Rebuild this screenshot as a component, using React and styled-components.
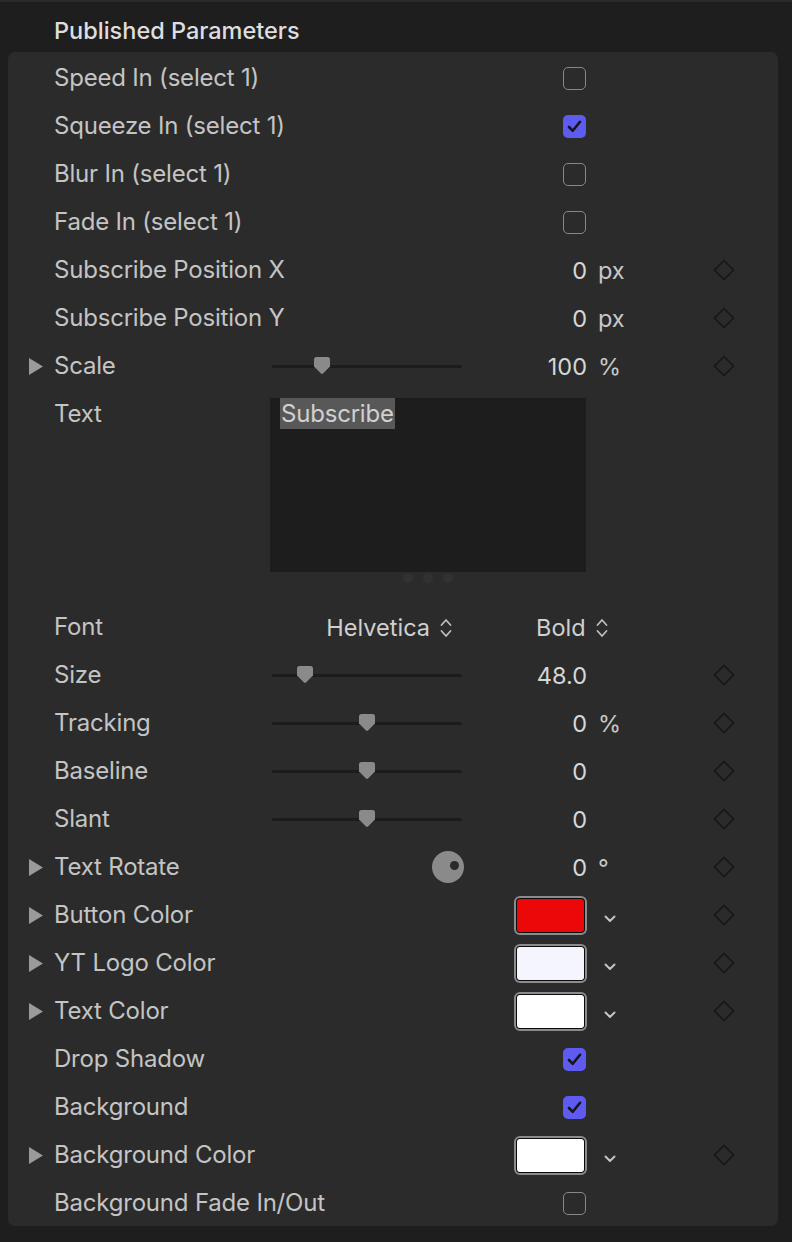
import React from "react";
import styled, { createGlobalStyle } from "styled-components";

const GlobalStyle = createGlobalStyle`
  html, body {
    margin: 0;
    padding: 0;
    background: #1e1e1e;
  }
  body {
    font-family: Inter, "Noto Sans", "Liberation Sans", sans-serif;
    -webkit-font-smoothing: antialiased;
  }
`;

const Page = styled.div`
  width: 792px;
  min-height: 1242px;
  box-sizing: border-box;
  border-top: 2px solid #2a2a2a;
  background: #1e1e1e;
`;

const Header = styled.div`
  height: 50px;
  box-sizing: border-box;
  padding: 6px 0 0 54px;
  display: flex;
  align-items: center;
  font-size: 23.5px;
  font-weight: 500;
  color: #dedede;
`;

const Panel = styled.div`
  margin: 0 14px 0 8px;
  padding: 1px 0 0;
  background: #2b2b2b;
  border-radius: 7px;
  overflow: hidden;
`;

const Row = styled.div`
  display: grid;
  grid-template-columns: 46px 218px 190px 125px 11px 102px 47px 1fr;
  height: ${(p) => p.$height || 48}px;
  align-items: ${(p) => (p.$top ? "start" : "center")};
  color: #c4c4c4;
  font-size: 24px;
`;

const Disclosure = styled.div`
  display: flex;
  align-items: center;
  padding-left: 20px;
`;

const Label = styled.div`
  white-space: nowrap;
  line-height: 50px;
  letter-spacing: -0.2px;
`;

const Cell = styled.div`
  display: flex;
  align-items: center;
  justify-content: ${(p) => p.$justify || "flex-start"};
  grid-column: ${(p) => p.$col || "auto"};
  min-width: 0;
`;

const Value = styled.div`
  font-size: 23.5px;
  color: #d6d6d6;
`;

const Unit = styled.div`
  font-size: 23.5px;
  color: #c8c8c8;
`;

const Box = styled.div`
  width: 23px;
  height: 23px;
  border-radius: 5px;
  box-sizing: border-box;
  margin-right: 1px;
  display: flex;
  align-items: center;
  justify-content: center;
  border: ${(p) => (p.$on ? "none" : "1.5px solid #888")};
  background: ${(p) => (p.$on ? "#5e5cf0" : "transparent")};
`;

const Track = styled.div`
  position: relative;
  width: 190px;
  height: 3px;
  background: #1c1c1c;
  border-radius: 2px;
`;

const Thumb = styled.svg`
  position: absolute;
  top: -9px;
  margin-left: -9px;
`;

const Well = styled.div`
  width: 73px;
  height: 39px;
  box-sizing: border-box;
  border: 2px solid #8c8c8c;
  border-radius: 6px;
  padding: 1px;
  background: #0c0c0c;
`;

const WellFill = styled.div`
  height: 100%;
  border-radius: 3px;
  background: ${(p) => p.$color};
`;

const ChevronCell = styled.div`
  display: flex;
  align-items: center;
  padding-left: 6px;
  padding-top: 8px;
`;

const Dial = styled.div`
  position: relative;
  width: 32px;
  height: 32px;
  border-radius: 50%;
  background: #8a8a8a;
  margin-right: -2px;
`;

const DialDot = styled.div`
  position: absolute;
  width: 9px;
  height: 9px;
  border-radius: 50%;
  background: #2b2b2b;
  top: 10px;
  left: 18px;
`;

const TextArea = styled.div`
  grid-column: 3 / 5;
  margin: 9px 0 0 -2px;
  display: flex;
  flex-direction: column;
  align-items: center;
`;

const TextField = styled.div`
  width: 316px;
  height: 174px;
  box-sizing: border-box;
  background: #1d1d1d;
  padding-left: 10px;
  align-self: flex-start;
`;

const Selected = styled.span`
  display: inline-block;
  background: #585858;
  color: #d0d0d0;
  font-size: 24px;
  line-height: 31px;
  letter-spacing: -0.2px;
  padding: 0 1px;
`;

const Grip = styled.div`
  display: flex;
  gap: 10px;
  margin-top: 1px;
  padding-right: 2px;
`;

const GripDot = styled.div`
  width: 10px;
  height: 10px;
  border-radius: 50%;
  background: #313131;
`;

const Popup = styled.div`
  display: flex;
  align-items: center;
  gap: 9px;
  color: #d0d0d0;
  font-size: 23.5px;
  padding-top: 1px;
  margin-left: ${(p) => p.$offset || 0}px;
  margin-right: ${(p) => p.$end || 0}px;
`;

const Triangle = () => (
  <svg width="16" height="19" viewBox="0 0 16 19">
    <path d="M1 1 L15 9.5 L1 18 Z" fill="#9a9a9a" />
  </svg>
);

const Diamond = () => (
  <svg width="22" height="22" viewBox="0 0 22 22">
    <path d="M11 1.5 L20.5 11 L11 20.5 L1.5 11 Z" fill="none" stroke="#171717" strokeWidth="1.6" />
  </svg>
);

const Check = () => (
  <svg width="15" height="13" viewBox="0 0 15 13">
    <path d="M2 7 L5.8 10.8 L13 1.8" fill="none" stroke="#161616" strokeWidth="2.6" strokeLinecap="round" strokeLinejoin="round" />
  </svg>
);

const ChevronDown = () => (
  <svg width="12" height="8" viewBox="0 0 12 8">
    <path d="M1.5 1.5 L6 6 L10.5 1.5" fill="none" stroke="#c4c4c4" strokeWidth="2" strokeLinecap="round" strokeLinejoin="round" />
  </svg>
);

const UpDown = () => (
  <svg width="14" height="22" viewBox="0 0 14 22">
    <path d="M2.5 8 L7 3 L11.5 8 M2.5 14 L7 19 L11.5 14" fill="none" stroke="#bdbdbd" strokeWidth="1.8" strokeLinecap="round" strokeLinejoin="round" />
  </svg>
);

const Slider = ({ pos }) => (
  <Track>
    <Thumb width="18" height="19" viewBox="0 0 18 19" style={{ left: `${pos * 100}%` }}>
      <path d="M1 3.5 Q1 1 3.5 1 L14.5 1 Q17 1 17 3.5 L17 10.5 L10 17.5 Q9 18.4 8 17.5 L1 10.5 Z" fill="#8a8a8a" />
    </Thumb>
  </Track>
);

const KeyCell = ({ show }) => <Cell $col="7" $justify="center">{show && <Diamond />}</Cell>;

const CheckRow = ({ label, on }) => (
  <Row>
    <Disclosure />
    <Label>{label}</Label>
    <Cell $col="4" $justify="flex-end">
      <Box $on={on}>{on && <Check />}</Box>
    </Cell>
  </Row>
);

const ValueRow = ({ label, value, unit, slider, expand, keyed = true }) => (
  <Row>
    <Disclosure>{expand && <Triangle />}</Disclosure>
    <Label>{label}</Label>
    <Cell $col="3">{slider !== undefined && <Slider pos={slider} />}</Cell>
    <Cell $col="4" $justify="flex-end">
      <Value>{value}</Value>
    </Cell>
    <Cell $col="6">{unit && <Unit>{unit}</Unit>}</Cell>
    <KeyCell show={keyed} />
  </Row>
);

const ColorRow = ({ label, color }) => (
  <Row>
    <Disclosure>
      <Triangle />
    </Disclosure>
    <Label>{label}</Label>
    <Cell $col="4" $justify="flex-end">
      <Well>
        <WellFill $color={color} />
      </Well>
    </Cell>
    <ChevronCell style={{ gridColumn: 6 }}>
      <ChevronDown />
    </ChevronCell>
    <KeyCell show />
  </Row>
);

export default function App() {
  return (
    <>
      <GlobalStyle />
      <Page>
        <Header>Published Parameters</Header>
        <Panel>
          <CheckRow label="Speed In (select 1)" />
          <CheckRow label="Squeeze In (select 1)" on />
          <CheckRow label="Blur In (select 1)" />
          <CheckRow label="Fade In (select 1)" />
          <ValueRow label="Subscribe Position X" value="0" unit="px" />
          <ValueRow label="Subscribe Position Y" value="0" unit="px" />
          <ValueRow label="Scale" value="100" unit="%" slider={0.263} expand />

          <Row $height={213} $top>
            <Disclosure />
            <Label>Text</Label>
            <TextArea>
              <TextField>
                <Selected>Subscribe</Selected>
              </TextField>
              <Grip>
                <GripDot />
                <GripDot />
                <GripDot />
              </Grip>
            </TextArea>
          </Row>

          <Row>
            <Disclosure />
            <Label>Font</Label>
            <Cell $col="3" $justify="flex-end">
              <Popup $end={9}>
                Helvetica
                <UpDown />
              </Popup>
            </Cell>
            <Cell $col="4 / 7">
              <Popup $offset={74}>
                Bold
                <UpDown />
              </Popup>
            </Cell>
          </Row>

          <ValueRow label="Size" value="48.0" slider={0.174} />
          <ValueRow label="Tracking" value="0" unit="%" slider={0.5} />
          <ValueRow label="Baseline" value="0" slider={0.5} />
          <ValueRow label="Slant" value="0" slider={0.5} />

          <Row>
            <Disclosure>
              <Triangle />
            </Disclosure>
            <Label>Text Rotate</Label>
            <Cell $col="3" $justify="flex-end">
              <Dial>
                <DialDot />
              </Dial>
            </Cell>
            <Cell $col="4" $justify="flex-end">
              <Value>0</Value>
            </Cell>
            <Cell $col="6">
              <Unit>°</Unit>
            </Cell>
            <KeyCell show />
          </Row>

          <ColorRow label="Button Color" color="#ec0808" />
          <ColorRow label="YT Logo Color" color="#f5f5fd" />
          <ColorRow label="Text Color" color="#ffffff" />
          <CheckRow label="Drop Shadow" on />
          <CheckRow label="Background" on />
          <ColorRow label="Background Color" color="#ffffff" />
          <CheckRow label="Background Fade In/Out" />
        </Panel>
      </Page>
    </>
  );
}
